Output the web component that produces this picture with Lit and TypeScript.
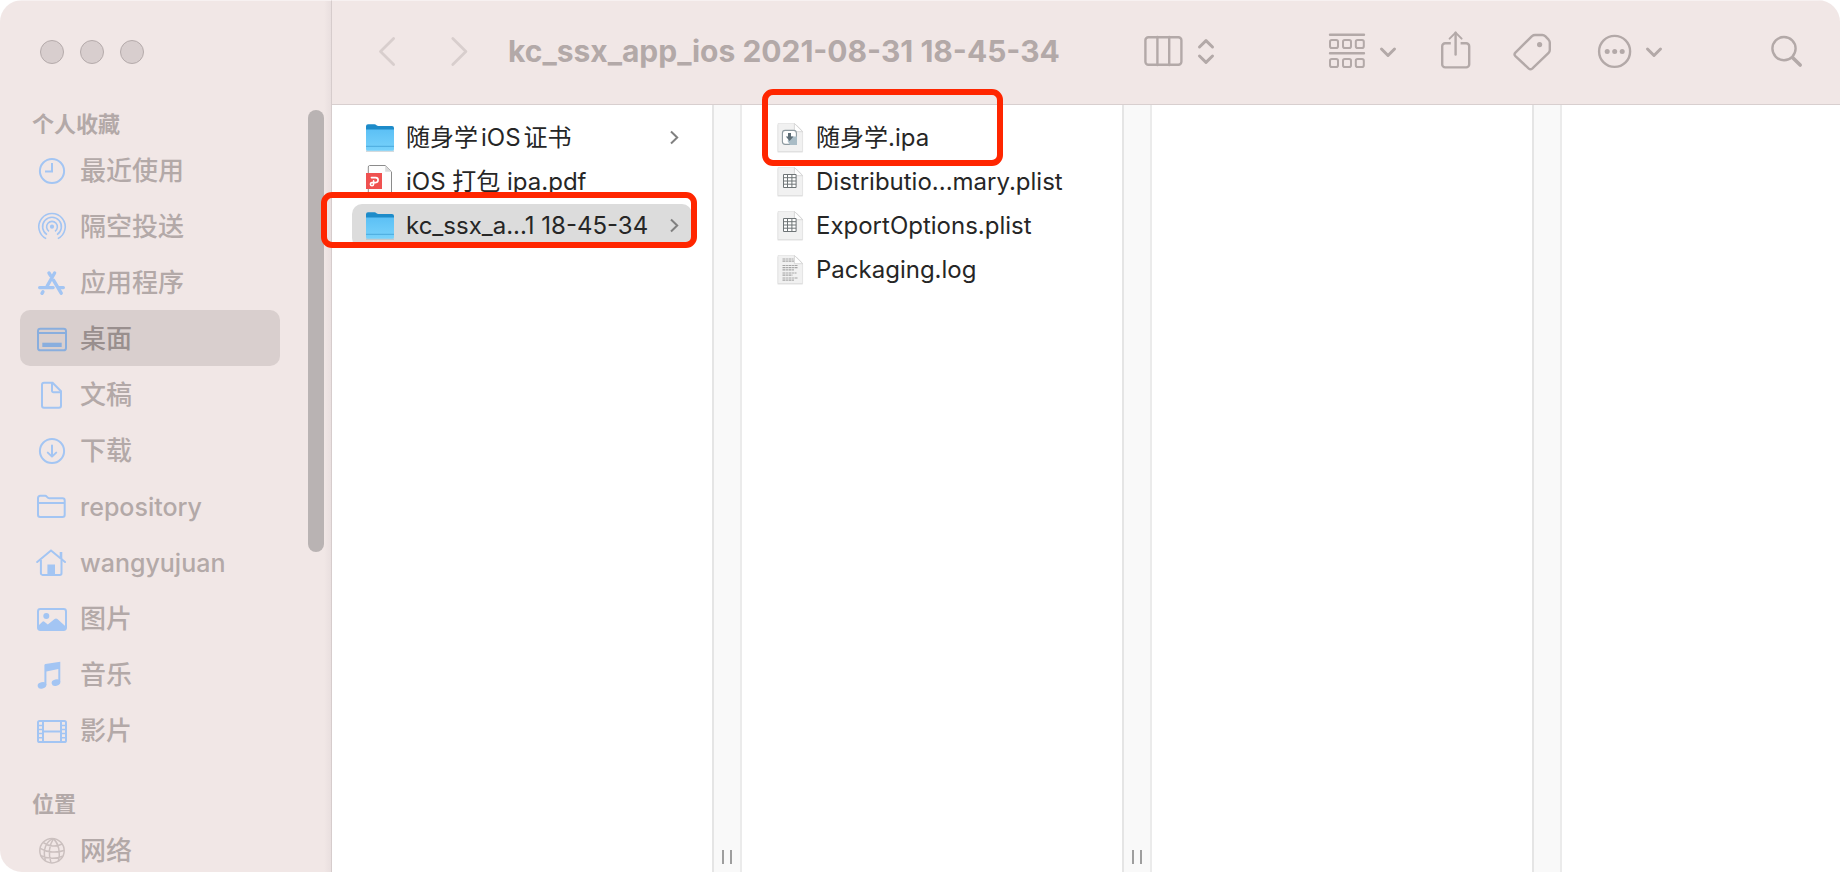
import { LitElement, html, svg, css, nothing } from "lit";
import { customElement, property, state } from "lit/decorators.js";
import { classMap } from "lit/directives/class-map.js";

/* 32 x 32 outline glyphs for the sidebar */
const placeIcons: Record<string, unknown> = {
  clock: svg`<circle cx="16" cy="17" r="12.1"/><path d="M16 9v8.6H9"/>`,
  airdrop: svg`<g stroke-width="1.6"><circle cx="16" cy="16.7" r="2.1" fill="currentColor" stroke="none"/>
    <path d="M13 21.3a5.4 5.4 0 1 1 6 0"/><path d="M11 24.6a9.4 9.4 0 1 1 10 0"/><path d="M10.2 28.6a13.2 13.2 0 1 1 11.6 0"/></g>`,
  apps: svg`<g stroke-width="3.4" stroke-linecap="round"><path d="M18.6 7l-7.4 13"/><path d="M13 7l1.6 2.6"/><path d="M17.6 14.4l7.6 12.8"/><path d="M6.9 25.8l-.9 1.5"/></g>
    <path stroke-width="3.2" stroke-linecap="round" d="M3.6 21.6h13.6M23 21.6h4.4"/>`,
  desktop: svg`<rect x="2" y="6.7" width="28" height="21.6" rx="2.4"/><path d="M2 11h28"/><path fill="currentColor" stroke="none" d="M6.3 20.7h19.4V25H6.3z"/>`,
  doc: svg`<path d="M8 4.8h8.6l8.4 8.4v14.6a2 2 0 0 1-2 2H8a2 2 0 0 1-2-2V6.8a2 2 0 0 1 2-2z"/><path d="M16 4.8v8a1.5 1.5 0 0 0 1.5 1.5H25"/>`,
  download: svg`<circle cx="16" cy="17" r="12.1"/><path stroke-linecap="round" stroke-linejoin="round" d="M16 11.4v11M11.8 18.6l4.2 4 4.2-4"/>`,
  folder: svg`<path stroke-linejoin="round" d="M2 8a2.2 2.2 0 0 1 2.2-2.2h5c1.6 0 2 2.4 4 2.4h13.3a2.2 2.2 0 0 1 2.2 2.2v14.4a2.2 2.2 0 0 1-2.2 2.2H4.2A2.2 2.2 0 0 1 2 24.8z"/><path d="M2 13h26.6"/>`,
  home: svg`<path stroke-linejoin="round" stroke-linecap="round" d="M1.2 16L15 4.4 29 16"/><path d="M4.9 14v13.2a1.7 1.7 0 0 0 1.7 1.7h17.2a1.7 1.7 0 0 0 1.7-1.7V14"/><path fill="currentColor" stroke="none" d="M23.7 6h2.6v7.6l-2.6-2.2zM11.4 18.4H19V29h-7.6z"/>`,
  image: svg`<rect x="2" y="7" width="28" height="21" rx="2.4"/><circle cx="10.3" cy="14" r="3" fill="currentColor" stroke="none"/><path fill="currentColor" stroke="none" d="M2 24l4.4-4.3q1-.8 2 0l3.4 2.9 6.8-5.6q1.4-1 2.8 0L30 24.7V28H2z"/>`,
  music: svg`<g fill="currentColor" stroke="none"><path d="M8.4 7.2a1.2 1.2 0 0 1 1-1.2L24.3 3.7V24h-2V10.9L10.4 13.4V27h-2z"/><ellipse cx="6" cy="27.4" rx="4.4" ry="3.2" transform="rotate(-14 6 27.4)"/><ellipse cx="20" cy="24.6" rx="4.4" ry="3.2" transform="rotate(-14 20 24.6)"/></g>`,
  film: svg`<rect x="2" y="7" width="28" height="21" rx="1.6"/><path d="M7 7v21M25 7v21M7 17.5h18"/><path stroke-width="1.5" d="M2 11.4h5M2 15.5h5M2 19.6h5M2 23.7h5M25 11.4h5M25 15.5h5M25 19.6h5M25 23.7h5"/>`,
  globe: svg`<g stroke-width="1.5"><circle cx="16" cy="16.7" r="12.2"/><path d="M17.5 4.6c-4 6-5.2 15-2.6 24M17.5 4.6C10 7 6.4 16 9.4 26.8M17.5 4.6c5.2 5 7.2 14 4.9 22.6M7.4 8.6c5 4 13 4.4 18.8 1.4M4.2 14.3c7 4.4 16.8 4.6 23.8 2.2M5 21.6c6 3.4 15.6 3.6 21.6.6"/></g>`,
};

/* blank sheet with a folded corner, shared by the document icons */
const sheet = svg`<path d="M3.6 2.6h25V30.4h-25z" fill="#bdbdbd" opacity=".6"/>
  <path d="M4 1.5h16.4l8.2 8.2v19.8H4z" fill="#f1f1f1" stroke="#dedede" stroke-width=".6"/><path d="M20.4 1.5l8.2 8.2h-8.2z" fill="#fff" stroke="#cfcfcf" stroke-width=".8"/><path d="M20.8 1l8.4 8.4V1z" fill="#fff"/>`;

const grid = svg`<g fill="#fff" stroke="#6f7577" stroke-width="1"><path d="M9.5 8.5h12.6v13H9.5z"/><path d="M9.5 11.7h12.6M9.5 15h12.6M9.5 18.2h12.6M13.5 8.5v13M17.9 8.5v13"/></g>`;

const fileIcons: Record<string, unknown> = {
  folder: svg`<defs><linearGradient id="front" x1="0" y1="0" x2="0" y2="1"><stop offset="0" stop-color="#5cc0f5"/><stop offset="1" stop-color="#78d2fb"/></linearGradient></defs>
    <path d="M2 28.5h28v1.2H2z" fill="#a9b4ba" opacity=".7"/>
    <path d="M2 4.2a2 2 0 0 1 2-2h6.4c1.8 0 2.4 1.8 4 1.8H28a2 2 0 0 1 2 2V12H2z" fill="#1d8bc9"/>
    <path d="M2 7.4h28v19.8a1.5 1.5 0 0 1-1.5 1.5h-25A1.5 1.5 0 0 1 2 27.2z" fill="url(#front)"/>
    <path d="M2 24.3h28" stroke="#4aa9dd" stroke-width="1"/>`,
  pdf: svg`<path d="M5.5-.5h15.7l6.3 6.3V30.5h-22a1.5 1.5 0 0 1-1.2-1.5V1A1.5 1.5 0 0 1 5.5-.5z" fill="#fdfdfd" stroke="#8b8b8b"/>
    <path d="M21.2-.3v6.1h6.2z" fill="#d9d9d9"/>
    <path d="M2 7h16v16H2z" fill="#ef5150"/>
    <path d="M7.4 11.6h4.2a2.5 2.5 0 0 1 0 5H7.8a1.6 1.6 0 1 0 1.8 1.7v-3.4" fill="none" stroke="#fff" stroke-width="1.6" stroke-linecap="round"/>`,
  ipa: svg`${sheet}<rect x="8.4" y="8.4" width="14" height="14" rx="2.8" fill="#fff" stroke="#8e9aa0" stroke-width="1.1"/>
    <path d="M16 14.5h7V23h-7l-2.5-4z" fill="#a9bcc6"/><path d="M14 11h3v3.5h2.5L15.6 19l-3.8-4.5H14z" fill="#5d6d76"/>`,
  plist: svg`${sheet}${grid}`,
  log: svg`${sheet}<path d="M8.5 5h11M8.5 7.2h11.5M8.5 11.5h15.5M8.5 13.7h15.5M8.5 15.9h12M8.5 19h14M8.5 21.2h10M8.5 24h15M8.5 26.2h12" stroke="#a4a4a4" stroke-width="1.2" stroke-dasharray="3 .6 1.8 .6" fill="none"/>`,
};

@customElement("place-item")
class PlaceItem extends LitElement {
  @property() icon = "";
  @property() label = "";
  @property({ type: Boolean }) selected = false;
  @property({ type: Boolean }) muted = false;
  static styles = css`
    :host { display: block; }
    .place {
      display: flex; align-items: center; gap: 12px; width: 100%; height: 56px;
      padding: 0 16px; border: 0; border-radius: 10px; background: none;
      font: inherit; font-size: 26px; line-height: 32px; font-weight: 500; color: #b3a9a8; text-align: left;
    }
    .selected { background: #d9cfce; color: #998f8e; }
    .glyph { width: 32px; height: 32px; flex: none; color: #a3c5f3; fill: none; stroke: currentColor; stroke-width: 2; }
    .selected .glyph { color: #89aede; }
    .muted .glyph { color: #cbc0bf; }
    .label { padding-top: 2px; }
    .latin { font-size: 25px; }
  `;
  render() {
    return html`<button class=${classMap({ place: true, selected: this.selected, muted: this.muted })}>
      <svg class="glyph" viewBox="0 0 32 32" aria-hidden="true">${placeIcons[this.icon]}</svg>
      <span class=${classMap({ label: true, latin: /^[a-z]/.test(this.label) })}>${this.label}</span>
    </button>`;
  }
}

@customElement("file-row")
class FileRow extends LitElement {
  @property() icon = "";
  @property() label = "";
  @property({ type: Boolean }) selected = false;
  static styles = css`
    :host { display: block; }
    .row {
      display: flex; align-items: center; gap: 10px; width: 100%; height: 44px;
      padding: 0 10px 0 12px; border: 0; border-radius: 10px; background: none;
      font: inherit; font-size: 24px; line-height: 30px; color: #262626; text-align: left;
      text-autospace: normal;
    }
    .selected { background: #dcdcdc; }
    .glyph { width: 32px; height: 32px; flex: none; overflow: visible; }
    .name { flex: 1; min-width: 0; white-space: nowrap; }
    .more { width: 16px; height: 16px; flex: none; fill: none; stroke: #808080; stroke-width: 2; }
  `;
  render() {
    return html`<button class=${classMap({ row: true, selected: this.selected })}>
      <svg class="glyph" viewBox="0 0 32 32" aria-hidden="true">${fileIcons[this.icon]}</svg>
      <span class="name">${this.label}</span>
      ${this.icon === "folder"
        ? html`<svg class="more" viewBox="0 0 16 16" aria-hidden="true"><path d="M5 1.5l6.2 6L5 13.5"/></svg>`
        : nothing}
    </button>`;
  }
}

@customElement("app-root")
class AppRoot extends LitElement {
  @state() private current = "desktop";

  private places = [
    ["clock", "最近使用"], ["airdrop", "隔空投送"], ["apps", "应用程序"], ["desktop", "桌面"],
    ["doc", "文稿"], ["download", "下载"], ["folder", "repository"], ["home", "wangyujuan"],
    ["image", "图片"], ["music", "音乐"], ["film", "影片"],
  ];
  private columns = [
    [["folder", "随身学iOS证书"], ["pdf", "iOS 打包 ipa.pdf"], ["folder", "kc_ssx_a...1 18-45-34"]],
    [["ipa", "随身学.ipa"], ["plist", "Distributio...mary.plist"], ["plist", "ExportOptions.plist"], ["log", "Packaging.log"]],
    [],
  ];

  static styles = css`
    :host {
      display: block; background: #fff;
      font-family: Inter, "Noto Sans CJK SC", sans-serif;
    }
    * { box-sizing: border-box; }
    .window {
      display: grid; grid-template-columns: 332px minmax(0, 1fr); height: 100vh;
      overflow: hidden; border-radius: 22px; background: #fff;
    }
    .sidebar {
      display: flex; flex-direction: column; min-height: 0;
      background: linear-gradient(to right, #f1e7e6 324px, #e9dfdf 331px);
      border-right: 1px solid #d6cccc; border-top: 1px solid #f7f1f1;
    }
    .lights { display: flex; flex: none; gap: 16px; height: 105px; padding: 39px 40px 0; }
    .light { width: 24px; height: 24px; padding: 0; border: 1px solid #b5abab; border-radius: 50%; background: #d8cece; }
    .scroll { display: flex; flex: 1; min-height: 0; overflow: hidden; justify-content: space-between; }
    .places { width: 260px; margin-left: 20px; flex: none; }
    .places h2 { margin: 0; padding-left: 12px; font-size: 22px; line-height: 36px; font-weight: 700; color: #b3a9a8; }
    .places ul, .files { margin: 0; padding: 0; list-style: none; }
    .places ul + h2 { margin-top: 28px; }
    .track { width: 23px; padding: 4px 7px 0 0; }
    .thumb { width: 16px; height: 58%; border-radius: 8px; background: #b9b3b3; }
    .main { display: flex; flex-direction: column; min-width: 0; min-height: 0; }
    .toolbar {
      display: flex; align-items: center; flex: none; height: 105px; padding: 0 36px 4px 44px;
      background: #f1e7e6; border-top: 1px solid #f7f1f1; border-bottom: 1px solid #d8cfcf;
    }
    .history { display: flex; gap: 48px; margin-right: 36px; }
    .tool { display: flex; padding: 0; border: 0; background: none; color: #b3a9a8; }
    .tool svg { display: block; fill: none; stroke: currentColor; stroke-width: 2.4; stroke-linecap: round; stroke-linejoin: round; overflow: visible; }
    .faint { color: #d8cecd; }
    h1 { margin: 0; font-size: 30px; line-height: 36px; font-weight: 700; color: #b3a9a8; white-space: nowrap; }
    .actions { display: flex; gap: 108px; margin-left: auto; }
    .group { display: flex; gap: 40px; }
    .browser { display: grid; grid-template-columns: 410px 410px 410px minmax(0, 1fr); flex: 1; min-height: 0; }
    .column { display: flex; min-width: 0; }
    .files { flex: 1; min-width: 0; padding: 11px 20px 0; }
    .gutter {
      display: flex; align-items: flex-end; justify-content: center; gap: 6px; flex: none; width: 30px; padding-bottom: 8px;
      background: #f9f9f9; border-left: 2px solid #e5e5e5; border-right: 2px solid #ebebeb;
    }
    .grip { width: 2px; height: 14px; background: #9e9e9e; }
    .files li { position: relative; }
    .mark { position: absolute; border: 6px solid #ff2600; border-radius: 11px; pointer-events: none; }
    .mark-folder { inset: -12px -5px 0 -31px; }
    .mark-package { inset: -27px 99px -6px 0; }
  `;

  render() {
    return html`<div class="window">
      <aside class="sidebar">
        <div class="lights">
          <button class="light" aria-label="关闭"></button><button class="light" aria-label="最小化"></button><button class="light" aria-label="缩放"></button>
        </div>
        <div class="scroll">
          <nav class="places">
            <h2>个人收藏</h2>
            <ul>${this.places.map(([icon, label]) => html`<li>
              <place-item .icon=${icon} .label=${label} .selected=${this.current === icon} @click=${() => (this.current = icon)}></place-item></li>`)}</ul>
            <h2>位置</h2>
            <ul><li><place-item icon="globe" label="网络" muted></place-item></li></ul>
          </nav>
          <div class="track"><div class="thumb"></div></div>
        </div>
      </aside>
      <main class="main">
        <header class="toolbar">
          <div class="history">
            <button class="tool faint" aria-label="后退"><svg width="24" height="32"><path stroke-width="2.8" d="M17.6 3.6L4.5 16.5l13.1 12.9"/></svg></button>
            <button class="tool faint" aria-label="前进"><svg width="24" height="32"><path stroke-width="2.8" d="M4.8 3.6l13.1 12.9L4.8 29.4"/></svg></button>
          </div>
          <h1>kc_ssx_app_ios 2021-08-31 18-45-34</h1>
          <div class="actions">
            <button class="tool" aria-label="分栏显示"><svg width="76" height="40">
              <rect x="1.4" y="6.2" width="36" height="27.6" rx="3"/><path d="M13.4 6v28M25.2 6v28"/>
              <path stroke-width="3" d="M55.5 16l6.5-6.3 6.5 6.3M55.5 25l6.5 6.3 6.5-6.3"/></svg></button>
            <div class="group">
              <button class="tool" aria-label="分组"><svg width="70" height="40">
                <path d="M2 3.7h34M2 22.3h34"/><g stroke-width="2"><rect x="2" y="9" width="8" height="8" rx="1.8"/><rect x="15" y="9" width="8" height="8" rx="1.8"/><rect x="27.8" y="9" width="8" height="8" rx="1.8"/><rect x="2" y="28" width="8" height="8" rx="1.8"/><rect x="15" y="28" width="8" height="8" rx="1.8"/><rect x="27.8" y="28" width="8" height="8" rx="1.8"/></g>
                <path stroke-width="3" d="M53.5 18l6.5 6.5 6.5-6.5"/></svg></button>
              <button class="tool" aria-label="共享"><svg width="34" height="40">
                <path stroke-linecap="butt" d="M12.8 12.2H7.2a3 3 0 0 0-3 3v18.2a3 3 0 0 0 3 3h21a3 3 0 0 0 3-3V15.2a3 3 0 0 0-3-3h-5.6"/><path d="M17.6 23.6V1.7"/><path stroke-width="2" d="M11.6 7.6l6-6 6 6"/></svg></button>
              <button class="tool" aria-label="标签"><svg width="46" height="40">
                <path d="M20 5.1Q21.4 4 23 4h7.4q1.6 0 2.8 1.2l3.4 3.5Q37.8 10 37.8 11.6v7.4q0 1.6-1.2 2.8L20.2 37.6q-1.7 1.5-3.4 0L3.4 25.2q-1.7-1.7 0-3.6z"/><circle cx="27.6" cy="13.6" r="2.6" fill="currentColor" stroke="none"/></svg></button>
              <button class="tool" aria-label="更多"><svg width="64" height="40">
                <circle cx="16.6" cy="20.4" r="15.5"/><g fill="currentColor" stroke="none"><circle cx="9.2" cy="20.4" r="2.5"/><circle cx="16.7" cy="20.4" r="2.5"/><circle cx="24.2" cy="20.4" r="2.5"/></g>
                <path stroke-width="3" d="M49.5 18l6.5 6.5 6.5-6.5"/></svg></button>
            </div>
            <button class="tool" aria-label="搜索"><svg width="34" height="40"><circle cx="14" cy="17.6" r="11.6"/><path stroke-width="3.6" d="M23 27l7.2 7"/></svg></button>
          </div>
        </header>
        <section class="browser">
          ${this.columns.map((files, c) => html`<div class="column">
            <ul class="files">${files.map(([icon, label], r) => html`<li>
              <file-row .icon=${icon} .label=${label} .selected=${c === 0 && r === 2}></file-row>
              ${c === 0 && r === 2 ? html`<div class="mark mark-folder"></div>` : nothing}
              ${c === 1 && r === 0 ? html`<div class="mark mark-package"></div>` : nothing}
            </li>`)}</ul>
            <div class="gutter" role="separator">${c < 2 ? html`<span class="grip"></span><span class="grip"></span>` : nothing}</div>
          </div>`)}
        </section>
      </main>
    </div>`;
  }
}
